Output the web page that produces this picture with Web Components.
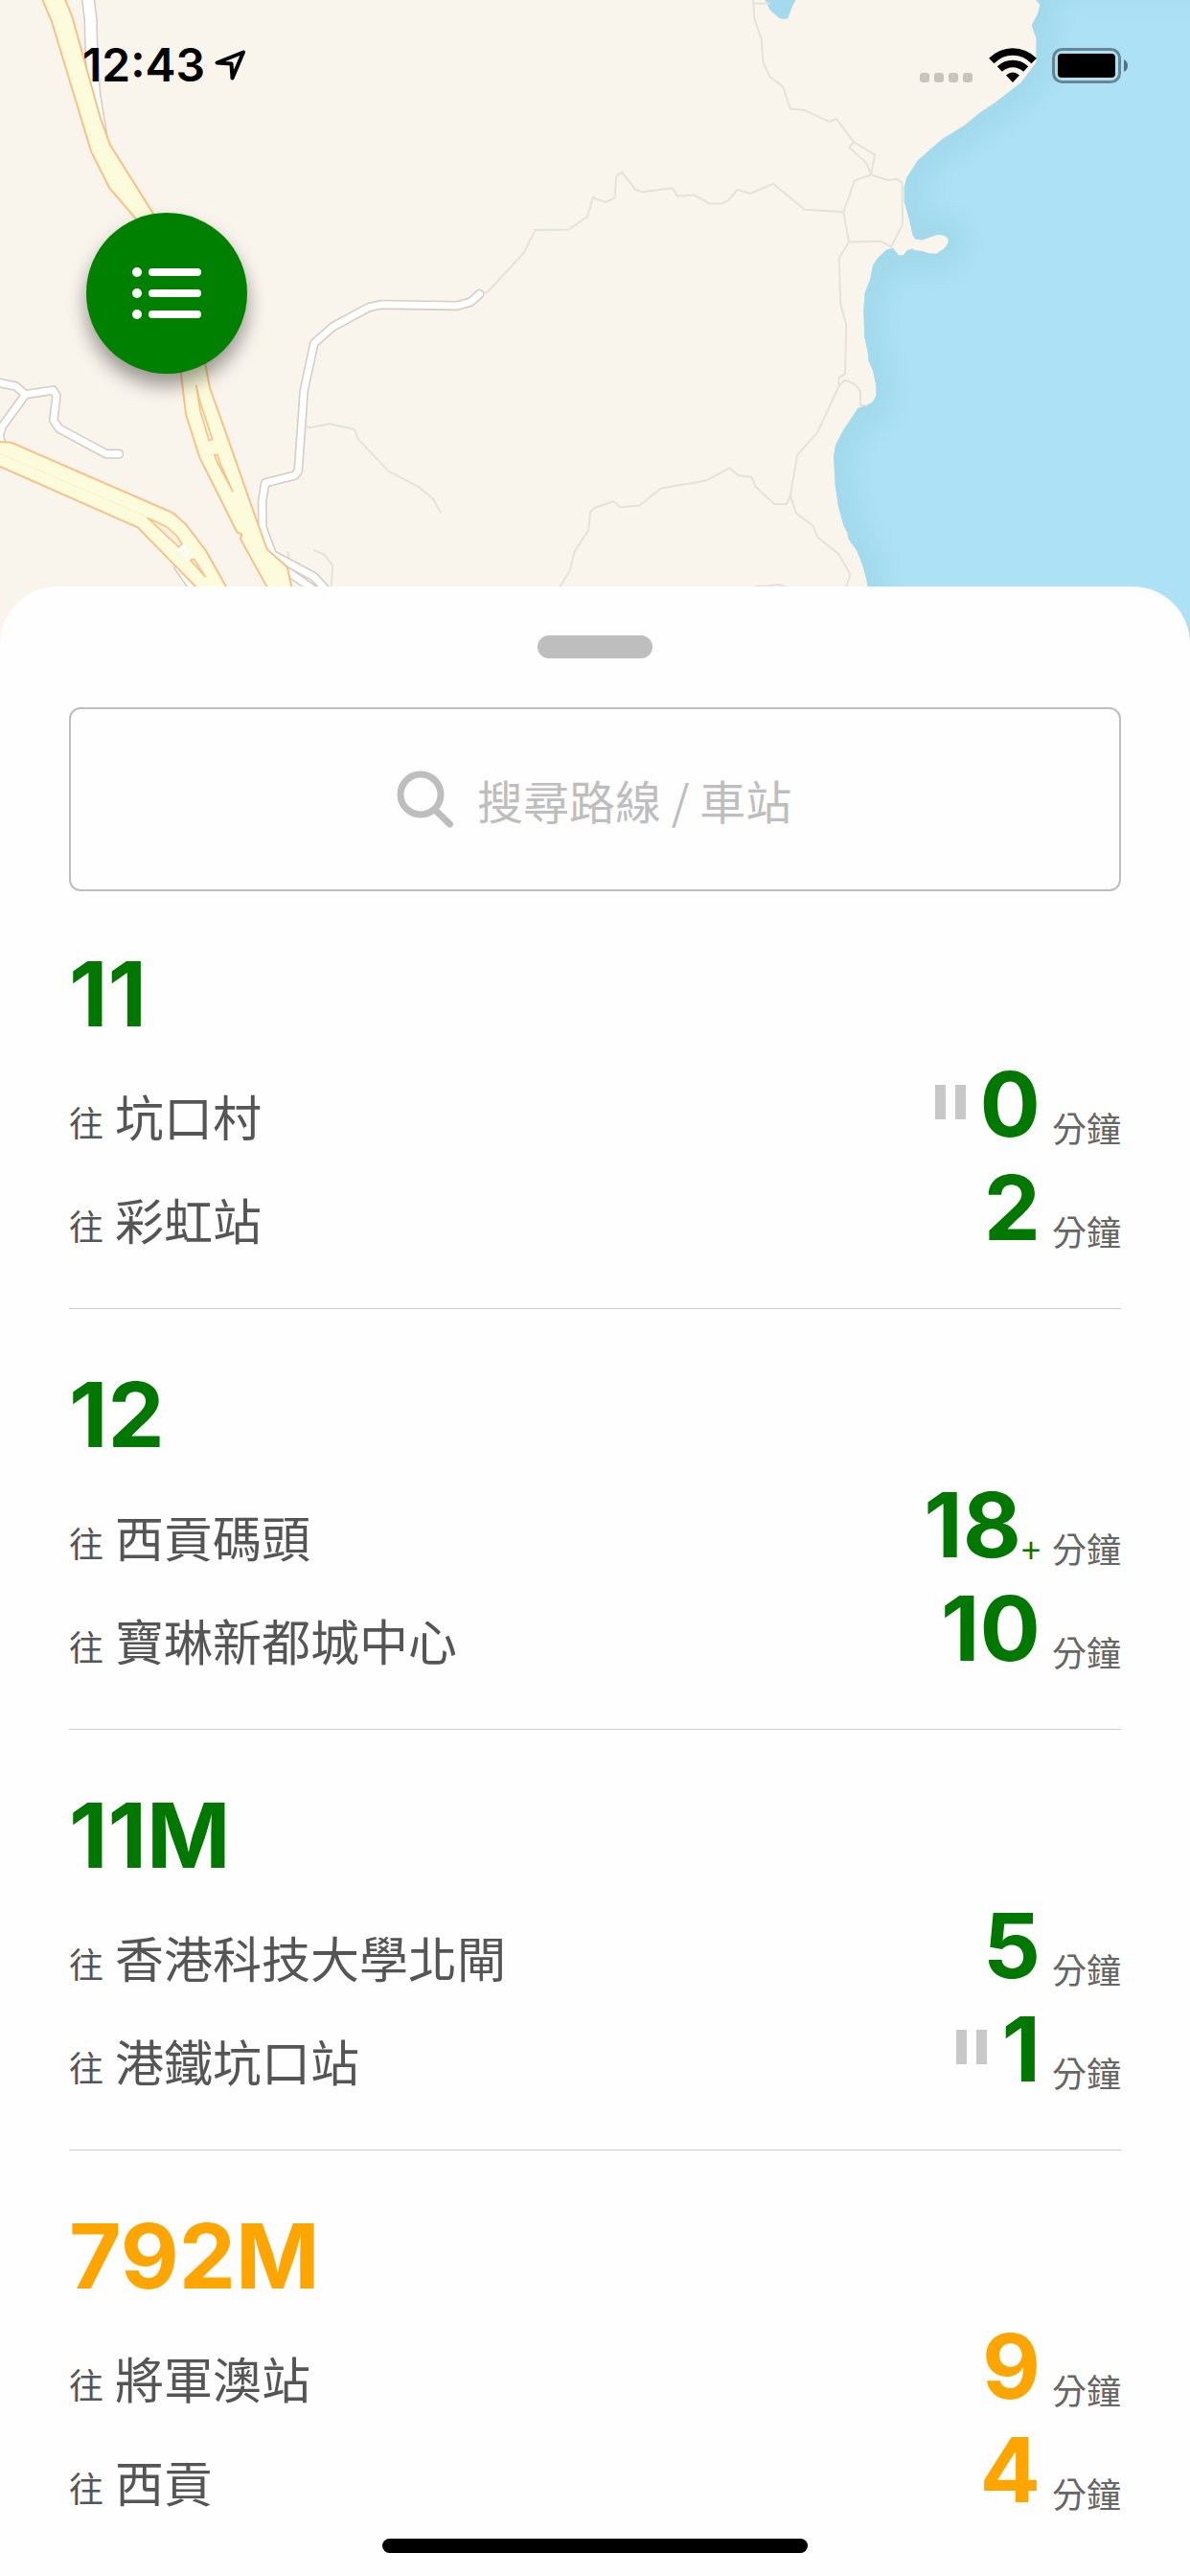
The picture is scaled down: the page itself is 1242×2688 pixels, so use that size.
<!DOCTYPE html>
<html lang="zh-Hant">
<head>
<meta charset="UTF-8">
<meta name="viewport" content="width=device-width, initial-scale=1">
<title>小巴到站時間</title>
<style>
    body {
        margin: 0;
        min-height: 100vh;
        background: #fefefe;
        color: #555;
        font-family: Inter, "Noto Sans CJK TC", sans-serif;
    }
</style>
</head>
<body>
<map-view>
    <status-bar time="12:43"></status-bar>
    <menu-button label="路線列表"></menu-button>
</map-view>
<bottom-sheet>
    <search-field placeholder="搜尋路線 / 車站"></search-field>
    <route-list>
        <route-card number="11">
            <route-row minutes="0" paused>坑口村</route-row>
            <route-row minutes="2">彩虹站</route-row>
        </route-card>
        <route-card number="12">
            <route-row minutes="18" more>西貢碼頭</route-row>
            <route-row minutes="10">寶琳新都城中心</route-row>
        </route-card>
        <route-card number="11M">
            <route-row minutes="5">香港科技大學北閘</route-row>
            <route-row minutes="1" paused>港鐵坑口站</route-row>
        </route-card>
        <route-card number="792M" type="bus">
            <route-row minutes="9">將軍澳站</route-row>
            <route-row minutes="4">西貢</route-row>
        </route-card>
    </route-list>
</bottom-sheet>
<home-indicator></home-indicator>

<script>
class MapView extends HTMLElement {
    constructor() {
        super();
        this.attachShadow({ mode: "open" }).innerHTML = `
            <style>
                :host {
                    display: grid;
                    height: 672px;
                    overflow: hidden;
                    background: #f9f4ec;
                }
                svg, .overlay { grid-area: 1 / 1; }
                svg { width: 100%; height: 672px; fill: none; }
                .overlay { z-index: 1; }
                .trail { stroke: #e3e3da; stroke-width: 5; stroke-linejoin: round; }
                .casing { stroke: #d6cdc3; stroke-width: 25; stroke-linecap: round; stroke-linejoin: round; }
                .road { stroke: #fff; stroke-width: 17; stroke-linecap: round; stroke-linejoin: round; }
                .highway { fill: #fcfbdb; stroke: #f8c187; stroke-width: 5; }
                .median { fill: #f9f1dc; stroke: #f8c187; stroke-width: 4; }
                .sea { fill: #ade1f6; }
            </style>
            <svg viewBox="0 0 1242 672" preserveAspectRatio="xMidYMin slice" aria-hidden="true">
                <defs>
                    <filter id="soft" x="-20%" y="-20%" width="140%" height="140%"><feGaussianBlur stdDeviation="30"/></filter>
                    <path id="coast" d="M1160-60L1162 0 1173 12 1167 35 1151 65 1163 98V160L1124 210 1055 262 1015 288 975 320 915 356 851 410 821 455 815 480V515L828 560 837 600 843 611 862 614 898 601Q910 599 920 602L931 610V622L920 636 900 649 880 648 862 642 845 641 835 636 822 641 813 652 801 654 785 634 768 639 745 660 733 677 725 715 711 750 708 795 710 860 720 905 721 922 733 950 741 985V1012L732 1028 716 1037 693 1044 654 1101 634 1138 629 1167 633 1240 641 1293 655 1344 665 1362 668 1378 690 1408 705 1445 715 1480 719 1500 730 1700H1700V-60Z"/>
                    <clipPath id="water"><use href="#coast"/></clipPath>
                </defs>
                <g transform="translate(621 0) scale(.396 .408)">
                    <use href="#coast" class="sea"/>
                    <g clip-path="url(#water)">
                        <use href="#coast" stroke="#a2d9eb" stroke-width="100" filter="url(#soft)"/>
                    </g>
                    <path fill="#a4daed" d="M443-10L461 25 485 46 497 49 508 47 521 14 535-10Z"/>
                    <path class="trail" d="M416-10L420 47 439 102 443 160 461 196 496 222 514 278 553 282 617 311 636 304 682 363 738 396 727 446 716 418 670 377 682 363M416 9H461M-6 506L0 508 30 517 52 506 56 451 71 440 107 485 124 491 204 481 218 502 262 499 302 521H333L351 513 375 485 409 495 470 470 553 536 655 542M727 447L684 462 655 542 669 619 753 617 780 631 810 576V468L796 458 772 461ZM669 619L643 660 647 775 662 830 659 957 643 965V987L659 972 682 981 699 998V1037H718M643 987L587 1105 533 1164 515 1268 505 1289H473L423 1245 413 1220 378 1216 355 1197 290 1230 174 1249 117 1293 67 1297 48 1282 0 1299M515 1268L530 1312 575 1345 587 1374 643 1418 673 1470 655 1520M420 1500L455 1498 485 1495 500 1500"/>
                </g>
                <g transform="scale(.396 .408)">
                    <path class="trail" d="M1570 508L1563 505 1548 554 1499 587 1411 588 1381 646 1284 748H1266M808 1089L816 1094 869 1084 934 1098 944 1123 1024 1205 1105 1246 1142 1277 1162 1312M1570 1297L1556 1309 1551 1356 1514 1411 1502 1459 1470 1510M826 1407L855 1418 877 1447 872 1510M758 1410L763 1435 790 1442"/>
                    <path class="casing" d="M740 1450L790 1483 830 1510M470 1450L520 1520"/>
                    <path class="road" d="M740 1450L790 1483 830 1510M470 1450L520 1520"/>
                    <path class="casing" d="M1264 752L1241 772 1204 782 1005 779 972 786 877 836 828 878 801 1000 786 1205 777 1216 699 1235 691 1283 692 1349 718 1418 828 1475 870 1520M314 1161H280L156 1096 141 1075 149 1012 140 998 67 1009 42 988-12 977M67 1009L5 1092-2 1115 8 1145"/>
                    <path class="road" d="M1264 752L1241 772 1204 782 1005 779 972 786 877 836 828 878 801 1000 786 1205 777 1216 699 1235 691 1283 692 1349 718 1418 828 1475 870 1520M314 1161H280L156 1096 141 1075 149 1012 140 998 67 1009 42 988-12 977M67 1009L5 1092-2 1115 8 1145"/>
                    <path class="casing" style="stroke-width:36" d="M230-20L239 50 241 130 248 240 275 400"/>
                    <path class="road" style="stroke-width:28" d="M230-20L239 50 241 130 248 240 275 400"/>
                    <path class="highway" d="M108-10L136 54 240 387 288 480 360 562 460 850 477 955 490 1060 526 1170 621 1354 626 1362 637 1366 634 1379 720 1530H775L757 1450 704 1405 665 1300 600 1120 553 992 541 930 500 720 403 545 290 370 264 300 190 42 168-10Z"/>
                    <path class="median" d="M517 985L528 1030 560 1124 551 1127 528 1052ZM565 1163H573L580 1185 614 1258 572 1182Z"/>
                    <path class="highway" d="M-10 1129L30 1132 440 1305 459 1314 490 1341 543 1409 610 1525H540L515 1500 462 1447 363 1349-10 1189Z"/>
                    <path stroke="#f7eccc" stroke-width="2" d="M0 1160L388 1322"/>
                    <path class="median" d="M388 1324L437 1346 466 1370 480 1392 472 1400ZM501 1432L511 1430 542 1476Z"/>
                    <path stroke="#fff" stroke-width="20" stroke-dasharray="12 6" d="M476 1398L504 1428"/>
                </g>
            </svg>
            <div class="overlay"><slot></slot></div>
        `;
    }
}

class StatusBar extends HTMLElement {
    constructor() {
        super();
        this.attachShadow({ mode: "open" }).innerHTML = `
            <style>
                :host {
                    display: flex;
                    align-items: center;
                    justify-content: space-between;
                    height: 136px;
                    padding: 0 64px 0 86px;
                    color: #000;
                }
                div { display: flex; align-items: center; }
                .left { gap: 10px; }
                .right { gap: 16px; }
                time { font-size: 48px; font-weight: 600; line-height: 60px; }
            </style>
            <div class="left">
                <time></time>
                <svg width="33" height="32" viewBox="0 0 33 32" fill="none" stroke="#000" stroke-width="4" stroke-linejoin="round" aria-hidden="true">
                    <path d="M2.500 13.500L30 2.500 18.500 29.500 17.500 14.500Z"/>
                </svg>
            </div>
            <div class="right">
                <svg width="56" height="37" viewBox="0 0 56 37" fill="#c8c4bd" aria-hidden="true">
                    <rect y="26" width="10" height="10" rx="3"/>
                    <rect x="15" y="26" width="10" height="10" rx="3"/>
                    <rect x="30" y="26" width="10" height="10" rx="3"/>
                    <rect x="45" y="26" width="10" height="10" rx="3"/>
                </svg>
                <svg width="50" height="37" viewBox="0 0 50 37" aria-hidden="true">
                    <path fill="none" stroke="#000" stroke-width="7.500" d="M2.800 13.500C15.500 .8 34.500 .8 47.200 13.500M11.300 22C19.500 14.700 30.500 14.700 38.700 22"/>
                    <path d="M18 28.500Q25 22.500 32 28.500L25 36Z"/>
                </svg>
                <svg width="80" height="37" viewBox="0 0 80 37" aria-hidden="true">
                    <rect x="1.500" y="1.500" width="69" height="34" rx="9" fill="none" stroke="#000" stroke-opacity=".4" stroke-width="3"/>
                    <rect x="6" y="6" width="60" height="25" rx="4"/>
                    <path fill-opacity=".5" d="M75 12Q79 14 79 18.500T75 25Z"/>
                </svg>
            </div>
        `;
    }

    connectedCallback() {
        this.shadowRoot.querySelector("time").textContent = this.getAttribute("time");
    }
}

class MenuButton extends HTMLElement {
    constructor() {
        super();
        this.attachShadow({ mode: "open" }).innerHTML = `
            <style>
                :host { display: block; padding: 86px 90px 0; }
                button {
                    display: flex;
                    align-items: center;
                    justify-content: center;
                    width: 168px;
                    height: 168px;
                    padding: 0;
                    border: 0;
                    border-radius: 50%;
                    background: #008000;
                    box-shadow: 0 12px 20px rgba(0, 0, 0, 0.4);
                    cursor: pointer;
                }
            </style>
            <button type="button">
                <svg width="72" height="54" viewBox="0 0 72 54" fill="#fff" aria-hidden="true">
                    <circle cx="5" cy="5" r="5"/>
                    <circle cx="5" cy="27" r="5"/>
                    <circle cx="5" cy="49" r="5"/>
                    <rect x="17" y="1" width="55" height="8" rx="4"/>
                    <rect x="17" y="23" width="55" height="8" rx="4"/>
                    <rect x="17" y="45" width="55" height="8" rx="4"/>
                </svg>
            </button>
        `;
    }

    connectedCallback() {
        this.shadowRoot.querySelector("button").setAttribute("aria-label", this.getAttribute("label"));
    }
}

class BottomSheet extends HTMLElement {
    constructor() {
        super();
        this.attachShadow({ mode: "open" }).innerHTML = `
            <style>
                :host {
                    display: block;
                    position: relative;
                    z-index: 2;
                    margin-top: -60px;
                    padding: 51px 72px 0;
                    border-radius: 60px 60px 0 0;
                    background: #fefefe;
                }
                .handle {
                    width: 120px;
                    height: 24px;
                    margin: 0 auto 51px;
                    border-radius: 12px;
                    background: #bebebe;
                }
            </style>
            <div class="handle"></div>
            <slot></slot>
        `;
    }
}

class SearchField extends HTMLElement {
    constructor() {
        super();
        this.attachShadow({ mode: "open" }).innerHTML = `
            <style>
                :host { display: block; }
                label {
                    display: flex;
                    align-items: center;
                    justify-content: center;
                    gap: 24px;
                    box-sizing: border-box;
                    height: 192px;
                    border: 2px solid #bebebe;
                    border-radius: 12px;
                }
                input {
                    box-sizing: border-box;
                    width: 330px;
                    height: 72px;
                    padding: 0;
                    border: 0;
                    outline: 0;
                    background: none;
                    color: #555;
                    font: 400 48px/72px "Noto Sans CJK TC", sans-serif;
                }
                input::placeholder { color: #bebebe; opacity: 1; }
            </style>
            <label>
                <svg width="60" height="60" viewBox="0 0 60 60" fill="none" stroke="#bebebe" stroke-width="7" stroke-linecap="round" aria-hidden="true">
                    <circle cx="25" cy="25" r="21"/>
                    <path d="M41 42L55.500 56"/>
                </svg>
                <input type="text">
            </label>
        `;
    }

    connectedCallback() {
        const input = this.shadowRoot.querySelector("input");
        input.placeholder = this.getAttribute("placeholder");
        input.setAttribute("aria-label", input.placeholder);
    }
}

class RouteList extends HTMLElement {
    constructor() {
        super();
        this.attachShadow({ mode: "open" }).innerHTML = `
            <style>
                :host {
                    display: flex;
                    flex-direction: column;
                    gap: 49px;
                    padding-top: 46px;
                }
                ::slotted(:last-child) { border-color: transparent !important; }
            </style>
            <slot></slot>
        `;
    }
}

class RouteCard extends HTMLElement {
    constructor() {
        super();
        this.attachShadow({ mode: "open" }).innerHTML = `
            <style>
                :host {
                    --route-color: #007800;
                    display: block;
                    padding-bottom: 51px;
                    border-bottom: 1px solid #ccc;
                }
                :host([type="bus"]) { --route-color: #ffa500; }
                h2 {
                    margin: 0;
                    color: var(--route-color);
                    font-size: 94px;
                    font-weight: 700;
                    line-height: 122px;
                }
            </style>
            <h2></h2>
            <slot></slot>
        `;
    }

    connectedCallback() {
        this.shadowRoot.querySelector("h2").textContent = this.getAttribute("number");
    }
}

class RouteRow extends HTMLElement {
    constructor() {
        super();
        this.attachShadow({ mode: "open" }).innerHTML = `
            <style>
                :host {
                    display: flex;
                    align-items: flex-end;
                    justify-content: space-between;
                    height: 108px;
                }
                .to {
                    display: flex;
                    align-items: baseline;
                    gap: 12px;
                    font: 400 51px/72px "Noto Sans CJK TC", sans-serif;
                }
                small { font-size: 36px; }
                .eta { display: flex; align-items: flex-end; }
                .minutes {
                    color: var(--route-color);
                    font-size: 94px;
                    font-weight: 700;
                    line-height: 108px;
                }
                .more, .unit { font: 400 36px/60px "Noto Sans CJK TC", sans-serif; }
                .more { color: var(--route-color); }
                .unit { margin-left: 12px; color: #666; }
                svg { align-self: center; margin: 0 15px 4px 0; }
                [hidden] { display: none; }
            </style>
            <div class="to"><small>往</small><span><slot></slot></span></div>
            <div class="eta">
                <svg width="32" height="36" viewBox="0 0 32 36" fill="#c8c8c8" aria-hidden="true">
                    <rect width="11" height="36"/>
                    <rect x="21" width="11" height="36"/>
                </svg>
                <span class="minutes"></span>
                <span class="more">+</span>
                <span class="unit">分鐘</span>
            </div>
        `;
    }

    connectedCallback() {
        this.shadowRoot.querySelector(".minutes").textContent = this.getAttribute("minutes");
        this.shadowRoot.querySelector("svg").toggleAttribute("hidden", !this.hasAttribute("paused"));
        this.shadowRoot.querySelector(".more").hidden = !this.hasAttribute("more");
    }
}

class HomeIndicator extends HTMLElement {
    constructor() {
        super();
        this.attachShadow({ mode: "open" }).innerHTML = `
            <style>
                :host {
                    display: flex;
                    justify-content: center;
                    position: fixed;
                    z-index: 3;
                    right: 0;
                    bottom: 24px;
                    left: 0;
                    pointer-events: none;
                }
                div { width: 444px; height: 15px; border-radius: 8px; background: #000; }
            </style>
            <div></div>
        `;
    }
}

customElements.define("map-view", MapView);
customElements.define("status-bar", StatusBar);
customElements.define("menu-button", MenuButton);
customElements.define("bottom-sheet", BottomSheet);
customElements.define("search-field", SearchField);
customElements.define("route-list", RouteList);
customElements.define("route-card", RouteCard);
customElements.define("route-row", RouteRow);
customElements.define("home-indicator", HomeIndicator);
</script>
</body>
</html>
